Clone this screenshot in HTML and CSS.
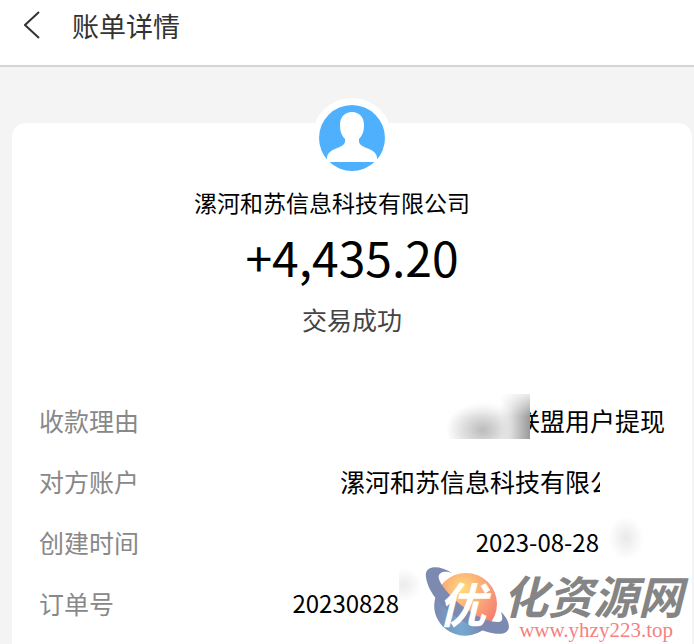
FILE: index.html
```
<!DOCTYPE html>
<html lang="zh-CN">
<head>
  <meta charset="UTF-8">
  <meta name="viewport" content="width=device-width, initial-scale=1.0">
  <title>账单详情</title>
  <link rel="stylesheet" href="styles.css">
</head>
<body>

  <!-- Top bar -->
  <header class="topbar">
    <button class="back" type="button" aria-label="返回">
      <svg width="18" height="30" viewBox="0 0 18 30" fill="none" stroke="#333" stroke-width="2">
        <path d="M15 1L1 14l14 13"/>
      </svg>
    </button>
    <h1>账单详情</h1>
  </header>

  <main class="card">
    <!-- Payer summary -->
    <section class="summary">
      <svg class="avatar" width="80" height="80" viewBox="0 0 80 80">
        <circle cx="40" cy="40" r="40" fill="#fff"/>
        <circle cx="40" cy="40" r="33" fill="#4fb1fd"/>
        <path fill="#fff" d="M40 14c7 0 12 5 12 13 0 7-2 11-5 14v3c1 4 6 5 10 7 5 2 8 5 8 9v4H15v-4c0-4 3-7 8-9 4-2 9-3 10-7v-3c-3-3-5-7-5-14 0-8 5-13 12-13z"/>
      </svg>
      <p class="company">漯河和苏信息科技有限公司</p>
      <p class="amount">+4,435.20</p>
      <p class="status">交易成功</p>
    </section>

    <!-- Bill details -->
    <dl class="details">
      <div class="row">
        <dt>收款理由</dt>
        <dd>联盟用户提现<i class="blur blur-reason"></i></dd>
      </div>
      <div class="row">
        <dt>对方账户</dt>
        <dd class="account">漯河和苏信息科技有限公<i class="blur blur-account"></i></dd>
      </div>
      <div class="row">
        <dt>创建时间</dt>
        <dd class="time">2023-08-28<i class="blur blur-time"></i></dd>
      </div>
      <div class="row">
        <dt>订单号</dt>
        <dd class="order">20230828<i class="blur blur-order"></i></dd>
      </div>
    </dl>
  </main>

  <!-- Site watermark -->
  <div class="watermark">
    <svg class="mark" width="86" height="76" viewBox="0 0 86 76">
      <defs>
        <radialGradient id="sun" cx="45%" cy="25%" r="70%">
          <stop offset="0" stop-color="#ffdc78"/>
          <stop offset=".5" stop-color="#fba878"/>
          <stop offset="1" stop-color="#f47b74"/>
        </radialGradient>
        <linearGradient id="sea" x1="0" y1="0" x2="1" y2="0">
          <stop offset="0" stop-color="#7c89b1"/>
          <stop offset=".5" stop-color="#75a9cf"/>
          <stop offset="1" stop-color="#7383ad"/>
        </linearGradient>
      </defs>
      <circle cx="42" cy="38" r="31" fill="url(#sun)"/>
      <path fill="url(#sea)" d="M12 30C19 43 42 57 65 58 50 76 24 72 14 54c-4-7-5-16-2-24z"/>
      <path fill="#7c89b1" d="M28 7C14-2 0 0 2 11c2 18 22 37 44 48 18 9 34 12 38 5 3-5-2-14-7-18 2 6 2 10-3 10-14 0-33-12-46-25C17 20 11 10 17 7c3-2 7-1 11 0z"/>
      <text class="mark-text" x="14" y="57">优</text>
    </svg>
    <div class="site">
      <span class="site-name">化资源网</span>
      <a class="site-url" href="#">www.yhzy223.top</a>
    </div>
  </div>

</body>
</html>
```
FILE: styles.css
```
* {
  box-sizing: border-box;
}

body {
  margin: 0;
  min-height: 100vh;
  display: flex;
  flex-direction: column;
  position: relative;
  overflow: hidden;
  background: #f4f4f4;
  color: #000;
  font-family: "Noto Sans CJK SC", sans-serif;
}

h1, p, dl, dd {
  margin: 0;
}

/* Top bar */
.topbar {
  display: flex;
  align-items: center;
  gap: 30px;
  height: 67px;
  padding: 0 24px 14px;
  background: #fff;
  border-bottom: 2px solid #d4d4d4;
}

.back {
  display: flex;
  padding: 0;
  border: none;
  background: none;
  cursor: pointer;
}

.topbar h1 {
  font-size: 27px;
  font-weight: 400;
  line-height: 40px;
  color: #333;
}

/* Card */
.card {
  flex: 1;
  margin: 56px 2px 0 12px;
  padding: 0 27px;
  background: #fff;
  border-radius: 14px 14px 0 0;
}

.summary {
  display: flex;
  flex-direction: column;
  align-items: center;
}

.avatar {
  margin-top: -25px;
}

.company {
  margin-top: 7px;
  padding-right: 40px;
  font-size: 23px;
  line-height: 34px;
}

.amount {
  font-size: 48px;
  line-height: 74px;
}

.status {
  margin-top: 8px;
  font-size: 25px;
  line-height: 36px;
  color: #444;
}

/* Details */
.details {
  margin-top: 52px;
}

.row {
  display: flex;
  justify-content: space-between;
  align-items: center;
  height: 61px;
  font-size: 25px;
  line-height: 36px;
  white-space: nowrap;
}

.row dt {
  color: #888;
}

.row dd {
  position: relative;
}

.row .account {
  margin-right: 50px;
}

.row .time {
  margin-right: 66px;
  font-size: 24px;
}

.row .order {
  margin-right: 266px;
  font-size: 24px;
}

/* Smudges over private text */
.blur {
  position: absolute;
}

.blur-reason {
  top: -8px;
  right: 135px;
  width: 86px;
  height: 45px;
  background:
    linear-gradient(to bottom, rgba(255, 255, 255, 0.8), rgba(255, 255, 255, 0) 50%),
    linear-gradient(to right, rgba(255, 255, 255, 0) 65%, #ddd 78%, #999),
    radial-gradient(ellipse at 45% 80%, #bbb 0, #fff 55%);
}

.blur-account {
  top: 0;
  right: 0;
  width: 15px;
  height: 36px;
  background: #fff;
}

.blur-time {
  top: -8px;
  left: 132px;
  width: 36px;
  height: 44px;
  background: radial-gradient(ellipse at center, #e9e9e9 0, #fff 70%);
}

.blur-order {
  top: -16px;
  left: 107px;
  width: 22px;
  height: 32px;
  background: radial-gradient(ellipse at 20% 50%, #ebebeb 0, #fff 75%);
}

/* Watermark */
.watermark {
  position: absolute;
  right: 11px;
  bottom: 2px;
  display: flex;
  align-items: flex-start;
}

.mark {
  margin-right: -7px;
}

.mark-text {
  fill: #fff;
  font-size: 48px;
  font-weight: 700;
  font-style: italic;
}

.site {
  display: flex;
  flex-direction: column;
  align-items: flex-end;
  padding-top: 4px;
}

.site-name {
  font-size: 45px;
  font-weight: 700;
  font-style: italic;
  line-height: 50px;
  color: #858585;
}

.site-url {
  margin-right: 10px;
  font-family: "Liberation Serif", serif;
  font-size: 21px;
  line-height: 20px;
  color: #f77f80;
  text-decoration: none;
}
```
